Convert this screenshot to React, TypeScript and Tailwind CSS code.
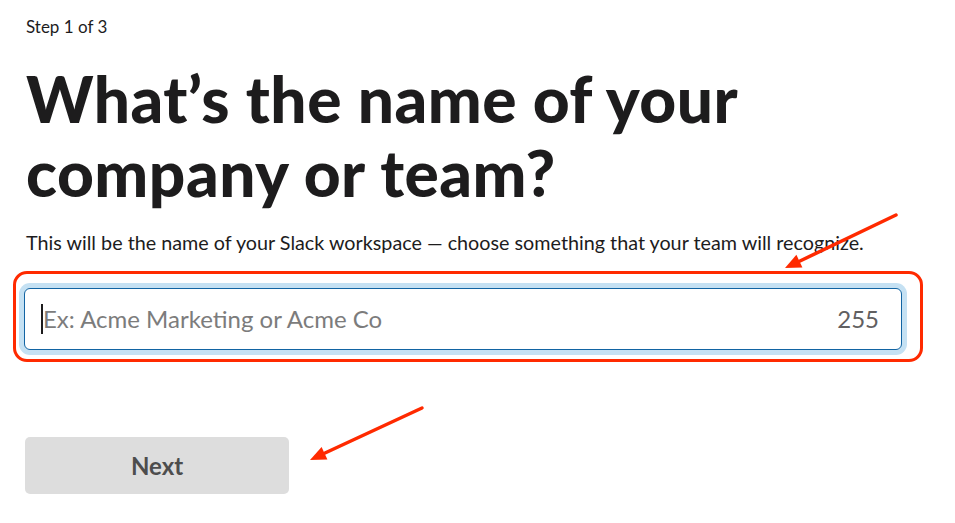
import React from 'react';

function Annotations() {
  return (
    <svg
      className="absolute inset-0 pointer-events-none"
      width={955}
      height={523}
      viewBox="0 0 955 523"
    >
      <line x1={896} y1={215} x2={800} y2={261} stroke="#ff2a00" strokeWidth={3.5} strokeLinecap="round" />
      <polygon points="785,268 802.4,267.4 796.4,254.8" fill="#ff2a00" />
      <line x1={422} y1={408} x2={325} y2={453} stroke="#ff2a00" strokeWidth={3.5} strokeLinecap="round" />
      <polygon points="310,460 327.4,459.6 321.6,446.9" fill="#ff2a00" />
    </svg>
  );
}

export default function App() {
  return (
    <div
      className="relative w-[955px] h-[523px] overflow-hidden bg-white text-[#1d1c1d]"
      style={{ fontFamily: 'Lato, "Noto Sans", sans-serif' }}
    >
      <div className="px-[26px] pt-[17px]">
        <div className="text-[17px] leading-[20px]">Step 1 of 3</div>

        <h1 className="mt-[25px] text-[64px] leading-[74px] font-black tracking-[0.5px] text-[#1d1c1d]">
          What’s the name of your
          <br />
          company or team?
        </h1>

        <p className="mt-[21px] text-[19.75px] leading-[24px]">
          This will be the name of your Slack workspace — choose something that your team will recognize.
        </p>

        <div className="relative mt-[33px] -ml-[2px] w-[878px]">
          <div className="flex h-[62px] items-center rounded-[6px] border border-[#1264a3] bg-white pl-[16px] pr-[22px] shadow-[0_0_0_5px_#c5e1f3]">
            <span className="h-[30px] w-[2px] bg-[#1d1c1d]" />
            <span className="flex-1 text-[24px] text-[#7c7c7c]">Ex: Acme Marketing or Acme Co</span>
            <span className="text-[24px] text-[#616061]">255</span>
          </div>
          <div className="absolute -left-[11px] -top-[17px] h-[91px] w-[910px] rounded-[14px] border-[3px] border-[#ff2a00] pointer-events-none" />
        </div>

        <button className="mt-[87px] -ml-[1px] h-[57px] w-[264px] rounded-[5px] bg-[#dddddd] text-[24px] font-bold text-[#4d4d4d]">
          Next
        </button>
      </div>
      <Annotations />
    </div>
  );
}
